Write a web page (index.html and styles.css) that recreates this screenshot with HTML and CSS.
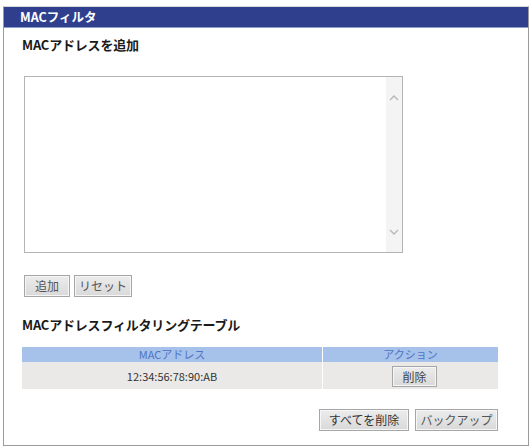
FILE: index.html
```html
<!DOCTYPE html>
<html lang="ja">
<head>
<meta charset="utf-8">
<link rel="stylesheet" href="styles.css">
</head>
<body>
<div class="panel">
  <div class="panel-head">MACフィルタ</div>
  <div class="panel-body">
    <h2 class="title">MACアドレスを追加</h2>
    <div class="textbox">
      <textarea class="ta"></textarea>
      <div class="scroll">
        <svg class="chev" width="10" height="6" viewBox="0 0 10 6"><path d="M1 5 L5 1 L9 5" fill="none" stroke="#b8b8b8" stroke-width="1.4"/></svg>
        <svg class="chev" width="10" height="6" viewBox="0 0 10 6"><path d="M1 1 L5 5 L9 1" fill="none" stroke="#b8b8b8" stroke-width="1.4"/></svg>
      </div>
    </div>
    <div class="btn-row">
      <button class="btn b-add">追加</button>
      <button class="btn b-reset">リセット</button>
    </div>
    <h2 class="title title-table">MACアドレスフィルタリングテーブル</h2>
    <table class="tbl">
      <thead>
        <tr><th class="c1">MACアドレス</th><th class="c2">アクション</th></tr>
      </thead>
      <tbody>
        <tr><td class="c1">12:34:56:78:90:AB</td><td class="c2"><button class="btn b-del">削除</button></td></tr>
      </tbody>
    </table>
    <div class="btn-row right">
      <button class="btn b-all">すべてを削除</button>
      <button class="btn b-bak">バックアップ</button>
    </div>
  </div>
</div>
</body>
</html>
```

FILE: styles.css
```css
html, body {
  margin: 0;
  padding: 0;
  background: #ffffff;
}
body {
  font-family: "Noto Sans CJK JP", "Liberation Sans", sans-serif;
  color: #222;
}
.panel {
  margin: 6px 0 0 3px;
  width: 524px;
  height: 438px;
  border: 1px solid #9a9a9a;
  border-top: 1px solid #d8d8d8;
  box-sizing: content-box;
}
.panel-head {
  height: 20px;
  line-height: 20px;
  background: #2f3f8e;
  border-bottom: 1px solid #8e9ccc;
  color: #fff;
  font-weight: bold;
  font-size: 12.5px;
  padding-left: 16px;
}
.panel-body {
  padding: 0 0 0 20px;
}
.title {
  margin: 0;
  font-size: 13px;
  line-height: 16px;
  font-weight: bold;
  color: #1a1a1a;
  padding-top: 9px;
  margin-left: -2px;
  letter-spacing: -0.2px;
}
.textbox {
  margin-top: 23px;
  width: 377px;
  height: 175px;
  border: 1px solid #b4b4b4;
  display: flex;
  background: #fff;
}
.ta {
  flex: 1;
  border: none;
  resize: none;
  outline: none;
  overflow: hidden;
  margin: 0;
  padding: 2px;
  font-family: inherit;
}
.scroll {
  width: 16px;
  background: #f4f4f4;
  display: flex;
  flex-direction: column;
  justify-content: space-between;
  align-items: center;
  padding: 18px 0 17px;
}
.btn-row {
  display: flex;
  gap: 4px;
  margin-top: 22px;
}
.btn {
  font-family: inherit;
  font-size: 12px;
  color: #555;
  height: 22px;
  padding: 0;
  margin: 0;
  background: linear-gradient(#ececec, #d9d9d9);
  border: 1px solid #a6a6a6;
  box-shadow: inset 0 0 0 1px #f6f6f6;
  line-height: 18px;
}
.b-add { width: 46px; }
.b-reset { width: 58px; }
.title-table {
  padding-top: 20px;
}
.tbl {
  margin-top: 14px;
  margin-left: -2px;
  width: 476px;
  border-collapse: collapse;
  font-size: 11px;
}
.tbl th {
  background: #a6c1ea;
  color: #4e74c4;
  font-weight: normal;
  height: 15px;
  line-height: 15px;
  padding: 0;
}
.tbl td {
  background: #ebe9e7;
  color: #333;
  height: 27px;
  padding: 0;
  text-align: center;
}
.tbl .c1 { width: 300px; border-right: 1px solid #ffffff; }
.tbl .c2 { width: 175px; }
.b-del {
  width: 45px;
  height: 21px;
  margin-top: 2px;
  margin-left: 8px;
  color: #444;
}
.right {
  justify-content: flex-end;
  width: 476px;
  margin-left: -2px;
  margin-top: 20px;
  gap: 6px;
}
.b-all { width: 90px; color: #333; }
.b-bak { width: 83px; }
```
